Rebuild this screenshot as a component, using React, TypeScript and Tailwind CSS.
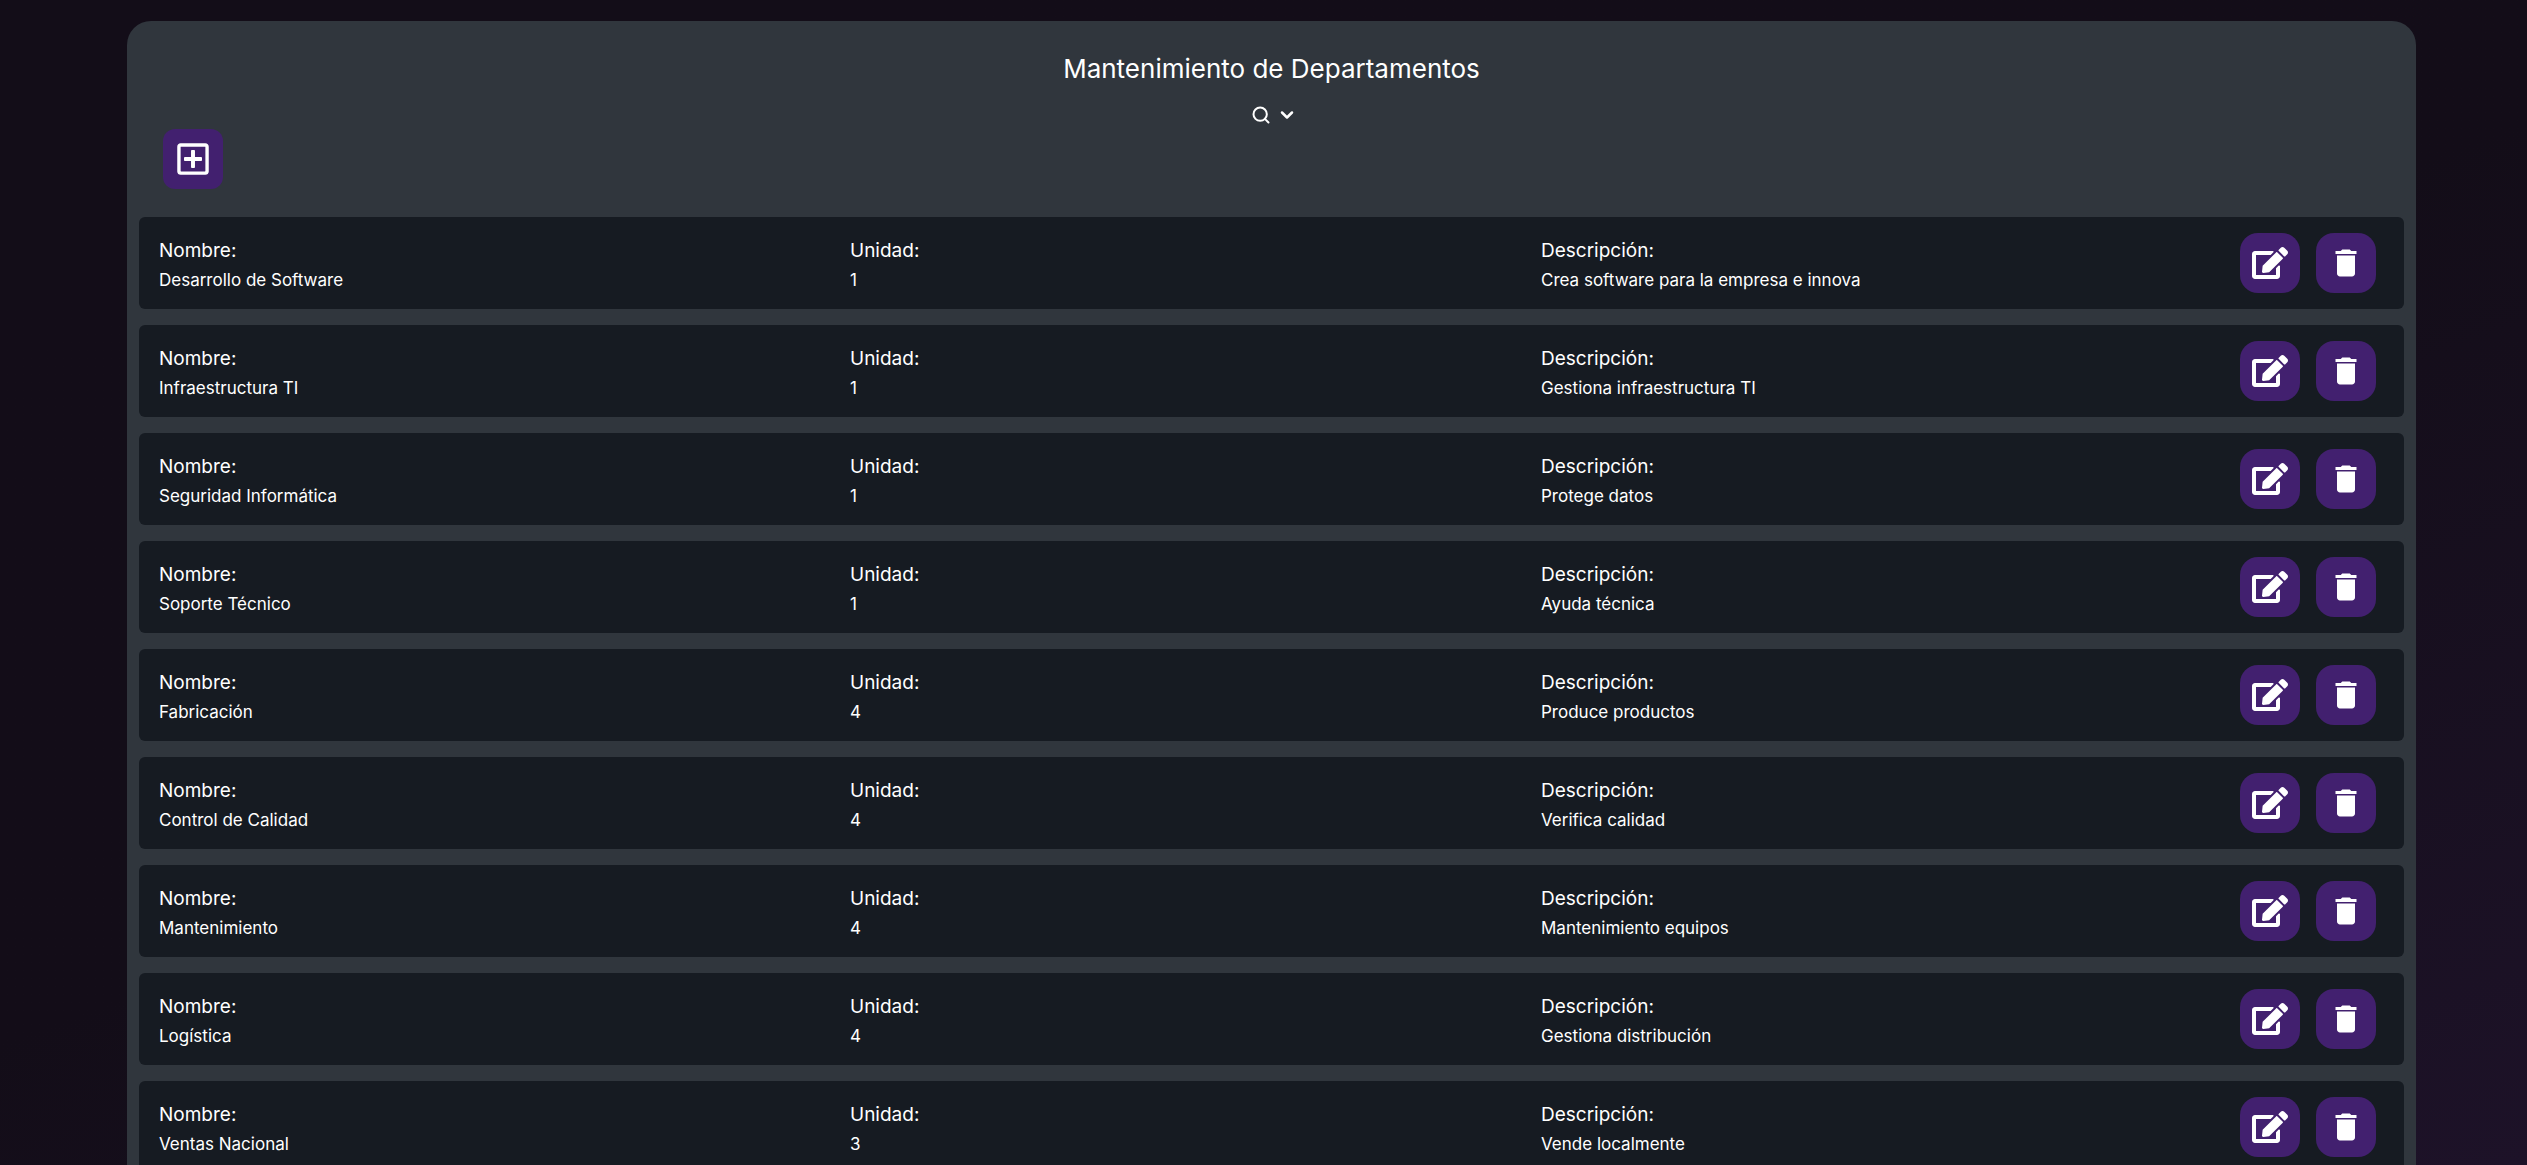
import React from "react";
import { FaEdit, FaRegPlusSquare } from "react-icons/fa";
import { FiSearch, FiChevronDown } from "react-icons/fi";
import { MdDelete } from "react-icons/md";

type Department = { nombre: string; unidad: number; descripcion: string };

const departments: Department[] = [
  { nombre: "Desarrollo de Software", unidad: 1, descripcion: "Crea software para la empresa e innova" },
  { nombre: "Infraestructura TI", unidad: 1, descripcion: "Gestiona infraestructura TI" },
  { nombre: "Seguridad Informática", unidad: 1, descripcion: "Protege datos" },
  { nombre: "Soporte Técnico", unidad: 1, descripcion: "Ayuda técnica" },
  { nombre: "Fabricación", unidad: 4, descripcion: "Produce productos" },
  { nombre: "Control de Calidad", unidad: 4, descripcion: "Verifica calidad" },
  { nombre: "Mantenimiento", unidad: 4, descripcion: "Mantenimiento equipos" },
  { nombre: "Logística", unidad: 4, descripcion: "Gestiona distribución" },
  { nombre: "Ventas Nacional", unidad: 3, descripcion: "Vende localmente" },
];

function Field({ label, value }: { label: string; value: string | number }) {
  return (
    <div className="pt-0.5">
      <dt className="text-[19px] leading-8">{label}</dt>
      <dd className="text-[17px] leading-[26px]">{value}</dd>
    </div>
  );
}

function DepartmentRow({ nombre, unidad, descripcion }: Department) {
  return (
    <li className="flex items-center rounded-[6px] bg-[#161b22] py-4 pr-7 pl-5">
      <dl className="grid grow grid-cols-3">
        <Field label="Nombre:" value={nombre} />
        <Field label="Unidad:" value={unidad} />
        <Field label="Descripción:" value={descripcion} />
      </dl>
      <div className="ml-2 flex gap-4">
        <button type="button" aria-label={`Editar ${nombre}`} className="flex size-[60px] items-center justify-center rounded-[18px] bg-[#42206f]">
          <FaEdit size={36} />
        </button>
        <button type="button" aria-label={`Eliminar ${nombre}`} className="flex size-[60px] items-center justify-center rounded-[18px] bg-[#42206f]">
          <MdDelete size={36} />
        </button>
      </div>
    </li>
  );
}

export default function App() {
  return (
    <div className="h-screen overflow-hidden bg-linear-160 from-[#130d18] from-50% to-[#1d1228] pt-[21px] pr-[111px] pl-[127px] font-['Inter',sans-serif] text-white">
      <main className="rounded-3xl bg-[#30363d] px-3 pt-7 pb-6">
        <h1 className="text-center text-[26px] leading-10">Mantenimiento de Departamentos</h1>
        <div className="flex justify-center pt-4 pl-1">
          <button type="button" aria-label="Buscar" className="flex items-center gap-1.5">
            <FiSearch size={20} strokeWidth={2.4} />
            <FiChevronDown size={20} strokeWidth={3} />
          </button>
        </div>
        <button type="button" aria-label="Agregar departamento" className="mt-1 ml-6 flex size-[60px] items-center justify-center rounded-xl bg-[#42206f]">
          <FaRegPlusSquare size={36} />
        </button>
        <ul className="mt-7 flex flex-col gap-4">
          {departments.map((d) => (
            <DepartmentRow key={d.nombre} {...d} />
          ))}
        </ul>
      </main>
    </div>
  );
}
